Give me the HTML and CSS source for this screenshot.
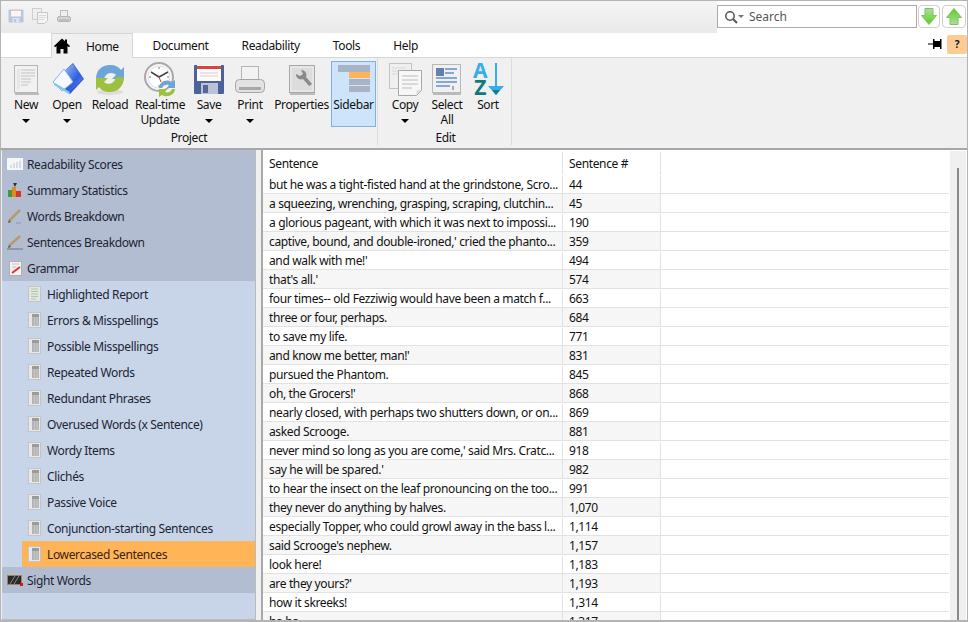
FILE: index.html
```html
<!DOCTYPE html>
<html lang="en">
    <head>
        <meta charset="UTF-8" />
        <link rel="stylesheet" href="styles.css">
    </head>
    <body>
        <div class="titlebar">
            <div class="quick">
                <svg width="16" height="16" viewBox="0 0 16 16"><rect x="0.500" y="1.500" width="15" height="13" rx="1" fill="#b9c6de"/><rect x="3" y="1.500" width="10" height="7" fill="#f8f6f6"/><rect x="3" y="1.500" width="10" height="1.500" fill="#f0c0c0"/><rect x="4.500" y="10" width="7" height="4.500" fill="#dde3ec"/><rect x="6" y="11" width="2" height="3" fill="#b9c6de"/></svg>
                <svg width="16" height="16" viewBox="0 0 16 16"><rect x="0.500" y="0.500" width="9" height="11" fill="#efefef" stroke="#cfcfcf"/><path d="M5.500 4.500h10v8l-3 3h-7z" fill="#f4f4f4" stroke="#c6c6c6"/><path d="M7 7.500h7M7 9.500h7M7 11.500h5" stroke="#dadada"/></svg>
                <svg width="16" height="16" viewBox="0 0 16 16"><rect x="4.500" y="2.500" width="7" height="6" fill="#efefef" stroke="#bdbdbd"/><rect x="1.500" y="8.500" width="13" height="5" rx="1.500" fill="#d4d4d4" stroke="#b5b5b5"/><rect x="3" y="11.500" width="10" height="1" fill="#a8a8a8"/></svg>
            </div>
            <div class="search-area">
                <div class="search">
                    <svg width="20" height="14" viewBox="0 0 20 14"><circle cx="6" cy="6" r="4.200" fill="none" stroke="#555" stroke-width="1.500"/><path d="M9 9l4 4" stroke="#555" stroke-width="2"/><path d="M14 5h6l-3 3z" fill="#777"/></svg>
                    <span>Search</span>
                </div>
                <div class="arrow-btn down"><svg width="16" height="17" viewBox="0 0 16 17"><defs><linearGradient id="gd" x1="0" y1="0" x2="0" y2="1"><stop offset="0" stop-color="#b6d8a2"/><stop offset="1" stop-color="#52d41c"/></linearGradient></defs><path d="M4 0.500h8v7h3.500L8 16.500 0.500 7.500H4z" fill="url(#gd)" stroke="#7fc261"/></svg></div>
                <div class="arrow-btn up"><svg width="16" height="17" viewBox="0 0 16 17"><defs><linearGradient id="gu" x1="0" y1="0" x2="0" y2="1"><stop offset="0" stop-color="#52d41c"/><stop offset="1" stop-color="#b6d8a2"/></linearGradient></defs><path d="M4 16.500h8v-7h3.500L8 0.500 0.500 9.500H4z" fill="url(#gu)" stroke="#7fc261"/></svg></div>
            </div>
        </div>
        <div class="tabs">
            <div class="tab active">
                <svg width="16" height="16" viewBox="0 0 16 16"><path d="M8 0.500L0 8l1 1.200 1.500-1.300V15.500h4v-4.500h3v4.500h4V7.900L15 9.200 16 8l-3-2.800V1.500h-2v1.800z" fill="#000"/></svg>
                <span>Home</span>
            </div>
            <div class="tab">Document</div>
            <div class="tab">Readability</div>
            <div class="tab">Tools</div>
            <div class="tab">Help</div>
            <div class="tab-tools">
                <svg width="14" height="12" viewBox="0 0 14 12"><path d="M0 6h6" stroke="#000"/><rect x="5" y="3" width="8" height="6"/><rect x="5" y="1" width="1.500" height="10"/><rect x="12" y="1" width="1.500" height="10"/></svg>
                <div class="help">?</div>
            </div>
        </div>
        <div class="ribbon">
            <div class="group">
                <div class="group-items">
                    <div class="rbtn btn-new"><svg class="ic" width="36" height="36" viewBox="0 0 36 36"><rect x="7" y="31" width="24" height="2" fill="#bbb"/><rect x="6.500" y="3.500" width="23" height="27" fill="#f1f1f1" stroke="#b5b5b5"/><rect x="9" y="7" width="3" height="20" fill="#e6e6e6"/><path d="M13 8h14M13 11h14M13 14h14M13 17h10M13 20h10M13 23h7" stroke="#dadada" stroke-width="2"/></svg><span>New</span><i class="caret"></i></div>
                    <div class="rbtn btn-open"><svg class="ic" width="36" height="36" viewBox="0 0 36 36"><defs><linearGradient id="og" x1="0" y1="0" x2="1" y2="1"><stop offset="0" stop-color="#a9c6f5"/><stop offset="0.600" stop-color="#2f5fe0"/><stop offset="1" stop-color="#6f8ff0"/></linearGradient></defs><path d="M4 20L24 1 35 17 21 32z" fill="#3656d8"/><path d="M13 11L24 2 34 17 20 30z" fill="url(#og)"/><path d="M4 20L15 7 24 20 13 29z" fill="#f4f8ff" stroke="#8fb0ee"/><path d="M5 23L20 32l1-2L6 21z" fill="#79c6f0"/></svg><span>Open</span><i class="caret"></i></div>
                    <div class="rbtn btn-reload"><svg class="ic" width="36" height="36" viewBox="0 0 36 36"><ellipse cx="18" cy="30" rx="13" ry="3" fill="#ddd"/><path d="M4 17C4 8 10 3 18 3c5 0 9 2 11 5l3-3v12H20l4-4c-3-3-10-3-12 4z" fill="#6da5d8"/><path d="M32 15c0 9-6 15-14 15-5 0-9-2-11-5l-3 3V16h12l-4 4c3 3 10 3 12-5z" fill="#9cc13f"/></svg><span>Reload</span></div>
                    <div class="rbtn btn-clock"><svg class="ic" width="36" height="36" viewBox="0 0 36 36"><circle cx="17" cy="15" r="14" fill="#f8f8f8" stroke="#a8a8a8" stroke-width="2"/><circle cx="17" cy="15" r="11" fill="#fff" stroke="#ddd"/><path d="M17 15L9 10M17 15l9-5" stroke="#444" stroke-width="1.500"/><path d="M17 15l2 5" stroke="#c33"/><path d="M17 5v2M17 23v2M7 15h2M25 15h2" stroke="#777"/><path d="M17 26c0-6 7-10 13-6l3-2v8h-8l2-3c-3-1-6 0-7 3z" fill="#6da5d8"/><path d="M33 27c0 6-8 9-13 6l-3 2v-8h8l-2 3c3 1 6 0 7-3z" fill="#9cc13f"/></svg><span>Real-time Update</span></div>
                    <div class="rbtn btn-save"><svg class="ic" width="36" height="36" viewBox="0 0 36 36"><rect x="3" y="3" width="30" height="29" rx="1" fill="#4b629c"/><rect x="6" y="3" width="24" height="16" fill="#fbfbfb"/><rect x="6" y="4" width="24" height="3" fill="#d9443f"/><path d="M9 11h18M9 14h18" stroke="#e2c9c9"/><rect x="10" y="21" width="17" height="11" fill="#b9c3d6"/><rect x="12" y="23" width="5" height="8" fill="#56688f"/></svg><span>Save</span><i class="caret"></i></div>
                    <div class="rbtn btn-print"><svg class="ic" width="36" height="36" viewBox="0 0 36 36"><rect x="9.500" y="4.500" width="17" height="14" fill="#f2f2f2" stroke="#b5b5b5"/><rect x="3.500" y="17.500" width="29" height="13" rx="4" fill="#e2e2e2" stroke="#a5a5a5"/><rect x="7" y="25" width="22" height="3" fill="#a8a8a8"/></svg><span>Print</span><i class="caret"></i></div>
                    <div class="rbtn btn-props"><svg class="ic" width="36" height="36" viewBox="0 0 36 36"><rect x="6" y="31" width="25" height="2" fill="#bbb"/><rect x="5.500" y="3.500" width="25" height="27" fill="#e6e6e6" stroke="#a8a8a8"/><rect x="8" y="6" width="20" height="22" fill="#dcdcdc"/><path d="M12 12a5 5 0 0 0 7 5l6 7 3-2-6-7a5 5 0 0 0-5-7l2 4-3 2z" fill="#8a8a8a"/></svg><span>Properties</span></div>
                    <div class="rbtn btn-sidebar selected"><svg class="ic" width="36" height="36" viewBox="0 0 36 36"><rect x="2" y="3" width="32" height="7" fill="#a9b3c6"/><rect x="13" y="10" width="21" height="6" fill="#ffb457"/><rect x="13" y="17" width="21" height="6" fill="#a9b3c6"/><rect x="13" y="24" width="21" height="6" fill="#a9b3c6"/></svg><span>Sidebar</span></div>
                </div>
                <div class="group-name">Project</div>
            </div>
            <div class="group edit">
                <div class="group-items">
                    <div class="rbtn btn-copy"><svg class="ic" width="36" height="36" viewBox="0 0 36 36"><rect x="2.500" y="1.500" width="22" height="25" fill="#efefef" stroke="#c4c4c4"/><path d="M5 6h14M5 9h14M5 12h8" stroke="#d8d8d8"/><path d="M11.500 8.500h23v20l-5 5h-18z" fill="#f7f7f7" stroke="#a8a8a8"/><path d="M15 14h16M15 18h16M15 22h16M15 26h10" stroke="#cfcfcf" stroke-width="1.500"/><path d="M29 33l1-5h5z" fill="#ddd"/></svg><span>Copy</span><i class="caret"></i></div>
                    <div class="rbtn btn-select"><svg class="ic" width="36" height="36" viewBox="0 0 36 36"><rect x="4" y="31" width="28" height="2" fill="#bbb"/><rect x="3.500" y="2.500" width="28" height="28" fill="#f0f0f0" stroke="#b8b8b8"/><rect x="7" y="6" width="8" height="8" fill="#6480b0"/><path d="M16 7h12M16 11h9M7 16h21M7 20h21M7 24h14" stroke="#86a6d8" stroke-width="2"/><path d="M24 24v4" stroke="#666"/></svg><span>Select All</span></div>
                    <div class="rbtn btn-sort"><svg class="ic" width="36" height="36" viewBox="0 0 36 36"><path d="M26 1v26" stroke="#35aef0" stroke-width="2"/><path d="M18 24h16l-8 9z" fill="#35aef0"/><path d="M22 28h8l-4 5z" fill="#137f8a"/></svg><span>Sort</span><span class="az"><b class="a">A</b><b class="z">Z</b></span></div>
                </div>
                <div class="group-name">Edit</div>
            </div>
        </div>
        <div class="main">
            <div class="sidebar" id="sidebar"></div>
            <div class="table-pane">
                <div class="table" id="table">
                    <div class="row head"><div class="c1">Sentence</div><div class="c2">Sentence #</div><div class="c3"></div></div>
                </div>
                <div class="scroll"><div class="thumb"></div></div>
            </div>
        </div>
        <script src="app.js"></script>
    </body>
</html>
```

FILE: styles.css
```css
* {
    box-sizing: border-box;
}
html, body {
    margin: 0;
    height: 622px;
    overflow: hidden;
}
body {
    width: 968px;
    border: 1px solid #b4b4b4;
    border-bottom: 2px solid #b4b4b4;
    background-color: #f0f0f0;
    color: #111;
    font-family: "Noto Sans", "Open Sans", sans-serif;
    font-size: 12px;
    letter-spacing: -0.36px;
}
.titlebar {
    height: 32px;
    display: flex;
    justify-content: space-between;
    background: linear-gradient(#f5f5f5, #e9e9e9);
}
.quick {
    display: flex;
    gap: 8px;
    padding: 7px 0 0 7px;
}
.search-area {
    display: flex;
    background-color: #fff;
    padding: 4px 0 0 0;
    width: 250px;
}
.search {
    width: 200px;
    height: 23px;
    border: 1px solid #ababab;
    display: flex;
    align-items: center;
    gap: 5px;
    padding-left: 6px;
    color: #555;
    letter-spacing: 0;
}
.arrow-btn {
    height: 23px;
    border: 1px solid #cfcfcf;
    border-radius: 4px;
    display: flex;
    align-items: center;
    justify-content: center;
}
.arrow-btn.down {
    width: 22px;
    margin-left: 1px;
}
.arrow-btn.up {
    width: 24px;
    margin-left: 2px;
}
.tabs {
    height: 25px;
    display: flex;
    background-color: #fff;
    border-bottom: 1px solid #d6d6d6;
    padding-left: 50px;
}
.tab {
    height: 25px;
    display: flex;
    align-items: center;
    padding: 0 16.5px;
    gap: 16px;
}
.tab.active {
    width: 82px;
    padding: 0 0 0 2px;
    margin-right: 3px;
    background-color: #f0f0f0;
    border: 1px solid #d6d6d6;
    border-bottom: none;
}
.tab-tools {
    margin-left: auto;
    display: flex;
    align-items: center;
    gap: 5px;
    padding: 0 0 2px 0;
}
.help {
    width: 20px;
    height: 19px;
    background-color: #fdcc94;
    border-radius: 2px;
    text-align: center;
    font-size: 10px;
    font-weight: 700;
    line-height: 19px;
}
.ribbon {
    height: 92px;
    display: flex;
    background-color: #f0f0f0;
    border-bottom: 2px solid #a4a8ac;
}
.group {
    width: 377px;
    border-right: 1px solid #dcdcdc;
    display: flex;
    flex-direction: column;
    padding-left: 4px;
    margin-bottom: 3px;
}
.group.edit {
    width: 134px;
    padding-left: 6px;
}
.group-items {
    display: flex;
    height: 73px;
    align-items: flex-start;
    padding-top: 3px;
}
.group-name {
    text-align: center;
    line-height: 14px;
    padding-right: 4px;
}
.rbtn {
    position: relative;
    flex: none;
    display: flex;
    flex-direction: column;
    align-items: center;
    text-align: center;
    line-height: 15px;
    height: 66px;
    border: 1px solid transparent;
}
.btn-new { width: 42px; }
.btn-open { width: 40px; }
.btn-reload { width: 46px; }
.btn-clock { width: 54px; }
.btn-save { width: 44px; }
.btn-print { width: 38px; }
.btn-props { width: 59px; margin-left: 3px; white-space: nowrap; }
.btn-sidebar { width: 45px; }
.btn-copy { width: 42px; }
.btn-select { width: 42px; }
.btn-sort { width: 40px; }
.rbtn.selected {
    background-color: #cde4fb;
    border-color: #7fb1e0;
}
.ic {
    flex: none;
    margin-bottom: -1px;
}
.caret {
    width: 0;
    height: 0;
    margin-top: 7px;
    border: 4px solid transparent;
    border-top: 4px solid #000;
    border-bottom: none;
}
.az {
    position: absolute;
    top: 0;
    left: 4px;
    display: flex;
    flex-direction: column;
    line-height: 17px;
    font-size: 21px;
    letter-spacing: 0;
}
.az .a {
    color: #35aef0;
}
.az .z {
    color: #117a7a;
}
.main {
    display: flex;
    height: 470px;
    background-color: #f0f0f0;
}
.sidebar {
    flex: none;
    width: 255px;
    background-color: #c8d4e8;
    border: 1px solid #bbb;
    border-left: 1px solid #f0f0f0;
}
.side-item {
    height: 26px;
    display: flex;
    align-items: center;
    gap: 4px;
    padding-left: 5px;
    background-color: #b3bdd1;
    color: #1c2433;
}
.side-item.sub {
    background-color: #c8d4e8;
    margin-left: 20px;
    padding-left: 6px;
    gap: 6px;
}
.side-item.current {
    background-color: #ffb457;
    color: #3a2410;
}
.side-item svg {
    flex: none;
}
.table-pane {
    position: relative;
    flex: 1;
    margin-left: 5px;
    background-color: #fff;
    border-left: 2px solid #a8a8a8;
    overflow: hidden;
}
.table {
    width: 686px;
}
.row {
    display: flex;
    height: 19px;
    padding-top: 1px;
    line-height: 18px;
    border-bottom: 1px solid #e2e2e2;
}
.row.alt {
    padding-top: 0;
}
.row.alt .c1, .row.alt .c2 {
    padding-top: 1px;
    background-color: #f6f6f6;
}
.row.head {
    height: 25px;
    padding-top: 2px;
    line-height: 23px;
    border-bottom: none;
}
.c1 {
    flex: none;
    width: 300px;
    padding-left: 6px;
    border-right: 1px solid #e2e2e2;
    white-space: nowrap;
    overflow: hidden;
}
.c2 {
    flex: none;
    width: 98px;
    padding-left: 6px;
    border-right: 1px solid #e2e2e2;
}
.scroll {
    position: absolute;
    top: 1px;
    right: 1px;
    bottom: 0;
    width: 16px;
    background-color: #f0f0f0;
}
.thumb {
    position: absolute;
    top: 17px;
    bottom: 0;
    left: 7px;
    width: 2px;
    background-color: #8a8a8a;
}
```

FILE: app.js
```js
const grid = `<svg width="13" height="16" viewBox="0 0 13 16"><rect x="0.500" y="0.500" width="12" height="15" fill="#e8e8e8" stroke="#c4c4c4"/><rect x="4" y="2" width="7" height="12" fill="#b4b4b4"/><rect x="4" y="2" width="7" height="3" fill="#9a9a9a"/><path d="M6.500 5v9M9 5v9" stroke="#c6c6c6"/></svg>`

const icons = {
    scores: `<svg width="16" height="16" viewBox="0 0 16 16"><rect x="0" y="2" width="16" height="12" fill="#f5f6f8"/><path d="M4 12V9M7 12V7M10 12V6M13 12V5" stroke="#d0d3da" stroke-width="1.500"/></svg>`,
    stats: `<svg width="16" height="16" viewBox="0 0 16 16"><rect x="1" y="8" width="4" height="7" fill="#3f9a3a"/><rect x="5" y="5" width="4" height="10" fill="#e08a20"/><rect x="9" y="9" width="5" height="6" fill="#d8352a"/><path d="M6 1h4L8 5z" fill="#333"/></svg>`,
    words: `<svg width="16" height="16" viewBox="0 0 16 16"><path d="M2 13L13 2" stroke="#b89a6a" stroke-width="2.500"/><path d="M1 15l1-3 2 2z" fill="#555"/><path d="M9 15h5" stroke="#8a93a6"/></svg>`,
    sentences: `<svg width="16" height="16" viewBox="0 0 16 16"><path d="M2 12L13 2" stroke="#b89a6a" stroke-width="2.500"/><path d="M1 14l1-3 2 2z" fill="#555"/><path d="M0 15h16" stroke="#6c7385"/></svg>`,
    grammar: `<svg width="16" height="16" viewBox="0 0 16 16"><rect x="2.500" y="1.500" width="12" height="14" fill="#f2f2f2" stroke="#b0b0b0"/><path d="M5 4h7M5 7h4" stroke="#d8b8b8"/><path d="M5 13l8-6" stroke="#e0303a" stroke-width="2"/></svg>`,
    report: `<svg width="13" height="16" viewBox="0 0 13 16"><rect x="0.500" y="0.500" width="12" height="15" fill="#e3e7e0" stroke="#c4c4c4"/><path d="M3 3h7M3 5.500h7M3 8h7M3 10.500h7M3 13h5" stroke="#b4c2b0"/></svg>`,
    sight: `<svg width="16" height="16" viewBox="0 0 16 16"><rect x="0.500" y="3.500" width="14" height="9" fill="#2a2a2a" stroke="#9a8458"/><path d="M3 12l5-8M7 12l5-8" stroke="#8a8a8a"/><rect x="13" y="11" width="3" height="3" fill="#e0101a"/></svg>`,
}

const sideItems = [
    ["Readability Scores", icons.scores],
    ["Summary Statistics", icons.stats],
    ["Words Breakdown", icons.words],
    ["Sentences Breakdown", icons.sentences],
    ["Grammar", icons.grammar],
    ["Highlighted Report", icons.report, true],
    ["Errors & Misspellings", grid, true],
    ["Possible Misspellings", grid, true],
    ["Repeated Words", grid, true],
    ["Redundant Phrases", grid, true],
    ["Overused Words (x Sentence)", grid, true],
    ["Wordy Items", grid, true],
    ["Clichés", grid, true],
    ["Passive Voice", grid, true],
    ["Conjunction-starting Sentences", grid, true],
    ["Lowercased Sentences", grid, true, true],
    ["Sight Words", icons.sight],
]

const rows = [
    ["but he was a tight-fisted hand at the grindstone, Scro...", "44"],
    ["a squeezing, wrenching, grasping, scraping, clutchin...", "45"],
    ["a glorious pageant, with which it was next to impossi...", "190"],
    ["captive, bound, and double-ironed,' cried the phanto...", "359"],
    ["and walk with me!'", "494"],
    ["that's all.'", "574"],
    ["four times-- old Fezziwig would have been a match f...", "663"],
    ["three or four, perhaps.", "684"],
    ["to save my life.", "771"],
    ["and know me better, man!'", "831"],
    ["pursued the Phantom.", "845"],
    ["oh, the Grocers!'", "868"],
    ["nearly closed, with perhaps two shutters down, or on...", "869"],
    ["asked Scrooge.", "881"],
    ["never mind so long as you are come,' said Mrs. Cratc...", "918"],
    ["say he will be spared.'", "982"],
    ["to hear the insect on the leaf pronouncing on the too...", "991"],
    ["they never do anything by halves.", "1,070"],
    ["especially Topper, who could growl away in the bass l...", "1,114"],
    ["said Scrooge's nephew.", "1,157"],
    ["look here!", "1,183"],
    ["are they yours?'", "1,193"],
    ["how it skreeks!", "1,314"],
    ["ha ha", "1,317"],
]

const sidebar = document.querySelector("#sidebar")
sideItems.forEach(([label, icon, sub, current]) => {
    const div = document.createElement("div")
    div.classList.add("side-item")
    if (sub) div.classList.add("sub")
    if (current) div.classList.add("current")
    div.innerHTML = icon

    const text = document.createElement("span")
    text.textContent = label
    div.appendChild(text)
    sidebar.appendChild(div)
})

const table = document.querySelector("#table")
rows.forEach(([sentence, number], i) => {
    const row = document.createElement("div")
    row.classList.add("row")
    if (i % 2 === 1) row.classList.add("alt")
    row.innerHTML = `<div class="c1"></div><div class="c2">${number}</div><div class="c3"></div>`
    row.querySelector(".c1").textContent = sentence
    table.appendChild(row)
})
```
